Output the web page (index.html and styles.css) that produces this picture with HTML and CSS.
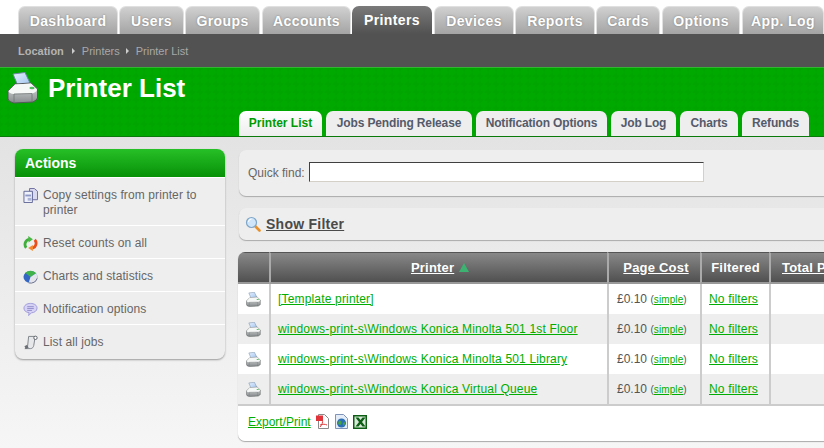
FILE: index.html
```html
<!DOCTYPE html>
<html lang="en">
<head>
<meta charset="utf-8">
<title>Printer List</title>
<link rel="stylesheet" href="styles.css">
</head>
<body>
<svg class="defs" width="0" height="0" aria-hidden="true">
  <defs>
    <linearGradient id="pb" x1="0" y1="0" x2="0" y2="1"><stop offset="0" stop-color="#dfe1e1"/><stop offset="1" stop-color="#868b8d"/></linearGradient>
    <linearGradient id="pp" x1="0" y1="0" x2="1" y2="1"><stop offset="0" stop-color="#e6f0fd"/><stop offset="1" stop-color="#9fc3ef"/></linearGradient>
    <symbol id="printer" viewBox="0 0 32 32">
      <path d="M6 2 L18 0.500 L23 11 L11 14 Z" fill="url(#pp)" stroke="#6f86a3" stroke-width="1"/>
      <path d="M1 19 L8 12 L24 11 L30.500 17 L30.500 26 Q30 28 26 30 L7 31 Q1.500 30 1 27 Z" fill="url(#pb)" stroke="#55595b" stroke-width="1"/>
      <path d="M1.500 19 Q2 21.500 7 22 L25 21.500 Q30 20 30 17.500 L24 11.500 L8 12.500 Z" fill="#f6f7f7"/>
      <path d="M7 22 L25 21.500 M7 22 L7 30.500 M25 21.500 L25 30" fill="none" stroke="#6e7375" stroke-width=".8"/>
      <ellipse cx="25" cy="16" rx="2.600" ry="1.300" fill="#54bd62"/>
    </symbol>
  </defs>
</svg>

<nav class="tabs">
  <a class="tab t-dash">Dashboard</a>
  <a class="tab t-users">Users</a>
  <a class="tab t-groups">Groups</a>
  <a class="tab t-acc">Accounts</a>
  <a class="tab active t-print">Printers</a>
  <a class="tab t-dev">Devices</a>
  <a class="tab t-rep">Reports</a>
  <a class="tab t-cards">Cards</a>
  <a class="tab t-opt">Options</a>
  <a class="tab t-log">App. Log</a>
</nav>

<div class="crumbs">
  <b>Location</b><i class="arrow"></i><span>Printers</span><i class="arrow"></i><span>Printer List</span>
</div>

<header class="banner">
  <div class="title">
    <svg class="title-icon" width="32" height="32"><use href="#printer"/></svg>
    <h1>Printer List</h1>
  </div>
  <div class="subtabs">
    <a class="subtab current">Printer List</a>
    <a class="subtab">Jobs Pending Release</a>
    <a class="subtab">Notification Options</a>
    <a class="subtab">Job Log</a>
    <a class="subtab">Charts</a>
    <a class="subtab">Refunds</a>
  </div>
</header>

<div class="content">
  <aside class="actions">
    <h2>Actions</h2>
    <ul>
      <li>
        <svg class="ai" viewBox="0 0 16 16"><path d="M7 .5h5l3.500 3v9H10V4H7z" fill="#d8d8ee" stroke="#6a6a9c"/><path d="M1 3.500h9v12H1z" fill="#eef0fa" stroke="#5f6595"/><path d="M2.500 7h6v2h-6z" fill="#8d98c6"/><path d="M5 10.500h4v3H5z" fill="#aab2d6"/></svg>
        <span>Copy settings from printer to printer</span>
      </li>
      <li>
        <svg class="ai" viewBox="0 0 16 16"><path d="M3.500 12.500A5.500 5.500 0 0 1 6.500 3.500" fill="none" stroke="#3fae3a" stroke-width="3"/><path d="M5.500 0L10.500 3.500L6 7z" fill="#49b943"/><path d="M12.500 4A5.500 5.500 0 0 1 10 13" fill="none" stroke="#ea4d1c" stroke-width="3"/><path d="M10.500 9.500L5.500 12.700L10.500 16z" fill="#f58a2c"/></svg>
        <span>Reset counts on all</span>
      </li>
      <li>
        <svg class="ai" viewBox="0 0 16 16"><ellipse cx="8" cy="8.500" rx="7.500" ry="6.500" fill="#3467c4"/><path d="M8 8.500 L2.500 4 A7.500 6.500 0 0 1 14 4.500z" fill="#3fb34a"/><path d="M8 8.500 L14 4.500 A7.500 6.500 0 0 1 12.500 13.700 A7 6 0 0 1 6 14.800z" fill="#e4e4ec"/><path d="M6 14.800 A7 6 0 0 0 15 10" fill="none" stroke="#6a6f8a"/></svg>
        <span>Charts and statistics</span>
      </li>
      <li>
        <svg class="ai" viewBox="0 0 16 16"><path d="M8 1.500c4 0 7 2 7 5s-3 5-6 5l-3 3 .5-3.200C3 11 1 9.300 1 6.500s3-5 7-5z" fill="#d6d2f6" stroke="#9e9ada"/><path d="M4.500 5h7M4.500 7h7M4.500 9h5" stroke="#8f8bc9"/></svg>
        <span>Notification options</span>
      </li>
      <li>
        <svg class="ai" viewBox="0 0 16 16"><path d="M6 1.500h7L11.500 11c-.3 2-1.500 3.500-3.500 3.500H2c2-.5 2.700-2 3-3.500z" fill="#e6e8ea" stroke="#7c8187"/><circle cx="13.300" cy="3" r="1.800" fill="#fff" stroke="#5a5f66"/><path d="M1.500 12l3-1.500 1.500 3-3 1.500z" fill="#6b7077"/></svg>
        <span>List all jobs</span>
      </li>
    </ul>
  </aside>

  <main class="main">
    <form class="box quick">
      <label for="qf">Quick find:</label>
      <input id="qf" class="qf-input" type="text">
    </form>

    <div class="box filter">
      <svg viewBox="0 0 16 16" width="16" height="16"><path d="M10 10l4.500 4.500" stroke="#e8912c" stroke-width="2.600" stroke-linecap="round"/><circle cx="6.500" cy="6.500" r="5" fill="#cfe6fa" stroke="#7fa6c8" stroke-width="1.200"/><path d="M3.500 6a3 3 0 0 1 3-3" stroke="#fff" fill="none"/></svg>
      <a>Show Filter</a>
    </div>

    <section class="box listing">
      <table>
        <colgroup>
          <col class="c-icon"><col class="c-name"><col class="c-cost"><col class="c-filt"><col class="c-total">
        </colgroup>
        <thead>
          <tr>
            <th></th>
            <th class="th-name"><a>Printer</a> <i class="sort"></i></th>
            <th class="th-cost"><a>Page Cost</a></th>
            <th>Filtered</th>
            <th class="th-total"><a>Total Pages</a></th>
          </tr>
        </thead>
        <tbody>
          <tr>
            <td class="ico"><svg width="15" height="15"><use href="#printer"/></svg></td>
            <td class="nm"><a>[Template printer]</a></td>
            <td class="cost">£0.10 <small>(<a>simple</a>)</small></td>
            <td class="fl"><a>No filters</a></td>
            <td></td>
          </tr>
          <tr>
            <td class="ico"><svg width="15" height="15"><use href="#printer"/></svg></td>
            <td class="nm"><a>windows-print-s\Windows Konica Minolta 501 1st Floor</a></td>
            <td class="cost">£0.10 <small>(<a>simple</a>)</small></td>
            <td class="fl"><a>No filters</a></td>
            <td></td>
          </tr>
          <tr>
            <td class="ico"><svg width="15" height="15"><use href="#printer"/></svg></td>
            <td class="nm"><a>windows-print-s\Windows Konica Minolta 501 Library</a></td>
            <td class="cost">£0.10 <small>(<a>simple</a>)</small></td>
            <td class="fl"><a>No filters</a></td>
            <td></td>
          </tr>
          <tr>
            <td class="ico"><svg width="15" height="15"><use href="#printer"/></svg></td>
            <td class="nm"><a>windows-print-s\Windows Konica Virtual Queue</a></td>
            <td class="cost">£0.10 <small>(<a>simple</a>)</small></td>
            <td class="fl"><a>No filters</a></td>
            <td></td>
          </tr>
        </tbody>
      </table>
      <div class="export">
        <a>Export/Print</a>
        <svg class="x-pdf" viewBox="0 0 13 15" width="13" height="15"><path d="M2.500.5h6l4 4v10h-10z" fill="#fff" stroke="#8a8a8a"/><path d="M0 1.500h7v5.500H0z" fill="#e0343a"/><path d="M4 13c2-2 3-5 2.500-7M4 11c3-1 5-1 7 0" stroke="#dd3b3b" fill="none"/></svg>
        <svg class="x-web" viewBox="0 0 13 15" width="13" height="15"><path d="M.5.500h8l4 4v10H.5z" fill="#e4ecf8" stroke="#7f93b8"/><circle cx="6.500" cy="9" r="4.500" fill="#2a6fb5"/><path d="M4 6.500c2 0 3 1 2.500 3S4 11 3 9.500zM8 9l2-1v2l-1.500 2z" fill="#47a447"/></svg>
        <svg class="x-xls" viewBox="0 0 14 14" width="14" height="14"><path d="M0 0h14v14H0z" fill="#0b5e13"/><path d="M1.500 1.500h11v11h-11z" fill="#d9e9d9"/><path d="M2.500 2.500l7 9h3l-7-9zM9.500 2.500l-7 9h3l7-9z" fill="#0b5e13"/></svg>
      </div>
    </section>
  </main>
</div>
</body>
</html>
```

FILE: styles.css
```css
html, body {
  margin: 0;
  padding: 0;
  height: 448px;
  overflow: hidden;
}
body {
  font-family: "Liberation Sans", Arial, sans-serif;
  font-size: 12px;
  color: #555;
  background: linear-gradient(#e3e3e3 137px, #f6f6f6 448px);
}
.defs { position: absolute; }

/* main tabs */
.tabs {
  display: flex;
  height: 34px;
  box-sizing: border-box;
  padding: 6px 0 0 18px;
  background: #fff;
  gap: 1px;
  white-space: nowrap;
}
.tab {
  box-sizing: border-box;
  height: 28px;
  line-height: 28px;
  flex: none;
  text-align: center;
  font-size: 14px;
  font-weight: bold;
  letter-spacing: .4px;
  color: #fff;
  text-shadow: 0 0 2px #777;
  background: linear-gradient(#d0d0d0, #a4a4a4);
  border: 1px solid #e0e0e0;
  border-bottom: 0;
  border-radius: 7px 7px 0 0;
}
.t-dash { width: 100px; }
.t-users { width: 65px; }
.t-groups { width: 75px; margin-right: 1px; }
.t-acc { width: 89px; }
.tab.active {
  background: linear-gradient(#7a7a7a, #525252);
  border: 0;
  text-shadow: none;
}
.t-print { width: 80px; margin-right: 1px; }
.t-dev { width: 80px; }
.t-rep { width: 80px; }
.t-cards { width: 64px; margin-right: 1px; }
.t-opt { width: 78px; margin-right: 1px; }
.t-log { width: 82px; }

/* breadcrumbs */
.crumbs {
  height: 33px;
  box-sizing: border-box;
  background: #525252;
  color: #a8a8a8;
  font-size: 11px;
  line-height: 34px;
  padding-left: 18px;
  display: flex;
  align-items: center;
}
.crumbs b { color: #b4b4b4; margin-right: 2px; }
.arrow {
  width: 0;
  height: 0;
  border-left: 3px solid #ccc;
  border-top: 3px solid transparent;
  border-bottom: 3px solid transparent;
  margin: 0 6.5px;
}

/* green banner */
.banner {
  height: 70px;
  box-sizing: border-box;
  border-top: 1px solid #33b533;
  border-bottom: 1px solid #0a7a0a;
  background-color: #00a500;
  background-image: radial-gradient(circle at 4px 4px, #00a900 3px, transparent 4px);
  background-size: 8px 8px;
  display: flex;
  flex-direction: column;
  justify-content: space-between;
}
.title {
  display: flex;
  align-items: center;
  padding: 4px 0 0 7px;
  height: 36px;
  box-sizing: border-box;
}
.title-icon { flex: none; }
h1 {
  margin: -1px 0 0 9px;
  font-size: 26px;
  line-height: 32px;
  color: #fff;
  font-weight: bold;
}
.subtabs {
  display: flex;
  gap: 4px;
  padding-left: 239px;
}
.subtab {
  box-sizing: border-box;
  flex: none;
  height: 25px;
  line-height: 25px;
  text-align: center;
  background: #eeeeee;
  border-radius: 7px 7px 0 0;
  font-size: 12px;
  font-weight: bold;
  letter-spacing: -.15px;
  color: #555a6a;
  white-space: nowrap;
}
.subtab:nth-child(1) { width: 83px; }
.subtab:nth-child(2) { width: 146px; }
.subtab:nth-child(3) { width: 131px; }
.subtab:nth-child(4) { width: 65px; }
.subtab:nth-child(5) { width: 58px; }
.subtab:nth-child(6) { width: 67px; }
.subtab.current {
  color: #009a00;
  letter-spacing: 0;
  background: linear-gradient(#fff, #ededed);
}

/* layout */
.content {
  display: flex;
  align-items: flex-start;
  padding: 12px 0 0 15px;
  gap: 13px;
}
.actions {
  flex: none;
  width: 210px;
  background: #eee;
  border-radius: 8px;
  box-shadow: 0 1px 2px #999;
}
.actions h2 {
  margin: 0;
  height: 28px;
  line-height: 28px;
  padding-left: 10px;
  font-size: 14px;
  color: #fff;
  background: linear-gradient(#27c027, #079107);
  border-radius: 8px 8px 0 0;
  border-bottom: 1px solid #fff;
}
.actions ul {
  margin: 0;
  padding: 0;
  list-style: none;
}
.actions li {
  box-sizing: border-box;
  display: flex;
  align-items: center;
  gap: 5px;
  height: 33px;
  padding: 2px 8px 0;
  border-top: 1px solid #fff;
  line-height: 15px;
  color: #666;
  letter-spacing: .1px;
}
.actions li:first-child {
  border-top: 0;
  height: 47px;
}
.actions li:first-child .ai { align-self: flex-start; margin-top: 8px; }
.actions li:last-child { height: 35px; padding-top: 0; }
.ai { flex: none; width: 15px; height: 15px; }

.main {
  flex: none;
  width: 760px;
  padding-top: 1px;
  display: flex;
  flex-direction: column;
}
.box {
  background: #eee;
  border-radius: 7px;
  box-shadow: 0 1px 1px #aaa;
}
.quick {
  height: 46px;
  display: flex;
  align-items: center;
  padding: 0 0 2px 9px;
  box-sizing: border-box;
  margin: 0 0 0 1px;
}
.quick label {
  margin: 2px 4px 0 0;
  color: #666;
}
.qf-input {
  width: 395px;
  height: 20px;
  box-sizing: border-box;
  margin: 0;
  padding: 0;
  background: #fff;
  border: 1px solid #d4d0c8;
  border-top: 1px solid #404040;
  border-left: 1px solid #404040;
}
.filter {
  margin: 12px 0 0 1px;
  box-sizing: border-box;
  height: 32px;
  display: flex;
  align-items: center;
  gap: 5px;
  padding: 0 0 1px 6px;
}
.filter a {
  font-size: 14px;
  font-weight: bold;
  letter-spacing: .25px;
  color: #4a4a4a;
  text-decoration: underline;
}
.listing {
  margin-top: 12px;
  overflow: hidden;
}
table {
  border-collapse: separate;
  border-spacing: 0;
  table-layout: fixed;
  width: 760px;
}
.c-icon { width: 31px; }
.c-name { width: 338px; }
.c-cost { width: 93px; }
.c-filt { width: 69px; }
th {
  box-sizing: border-box;
  height: 32px;
  padding: 0;
  background: linear-gradient(#888, #505050);
  border-left: 2px solid #aaa;
  border-top: 1px solid #555;
  border-bottom: 2px solid #999;
  color: #fff;
  font-size: 13px;
  font-weight: bold;
  letter-spacing: .2px;
  text-align: center;
}
th:first-child { border-left: 0; }
th a { text-decoration: underline; }
.th-name { padding-left: 2px; }
.th-cost { padding-left: 3px; }
.sort {
  display: inline-block;
  width: 0;
  height: 0;
  border-left: 5px solid transparent;
  border-right: 5px solid transparent;
  border-bottom: 9px solid #3cb371;
  margin-left: 1px;
}
.th-total { text-align: left; padding-left: 11px; }
td {
  box-sizing: border-box;
  height: 30px;
  padding: 0;
  border-left: 2px solid #ccc;
  color: #555;
  background: #fff;
}
td:first-child { border-left: 0; }
tbody tr:nth-child(even) td { background: #eee; }
td a, .export a {
  color: #00ad00;
  text-decoration: underline;
}
.ico { text-align: center; }
.ico svg { display: block; margin: 0 auto 0 8px; }
.nm { padding-left: 7px; letter-spacing: .17px; }
.cost { padding-left: 8px; }
.cost small { font-size: 10px; letter-spacing: .1px; }
.fl { padding-left: 7px; letter-spacing: .17px; }
.export {
  box-sizing: border-box;
  height: 37px;
  display: flex;
  align-items: center;
  padding: 0 0 4px 10px;
  background: #fff;
  border-top: 2px solid #ccc;
  border-radius: 0 0 7px 7px;
  gap: 5px;
}
.x-web { margin-left: 1px; }
.x-xls { margin-left: 0; }
```
